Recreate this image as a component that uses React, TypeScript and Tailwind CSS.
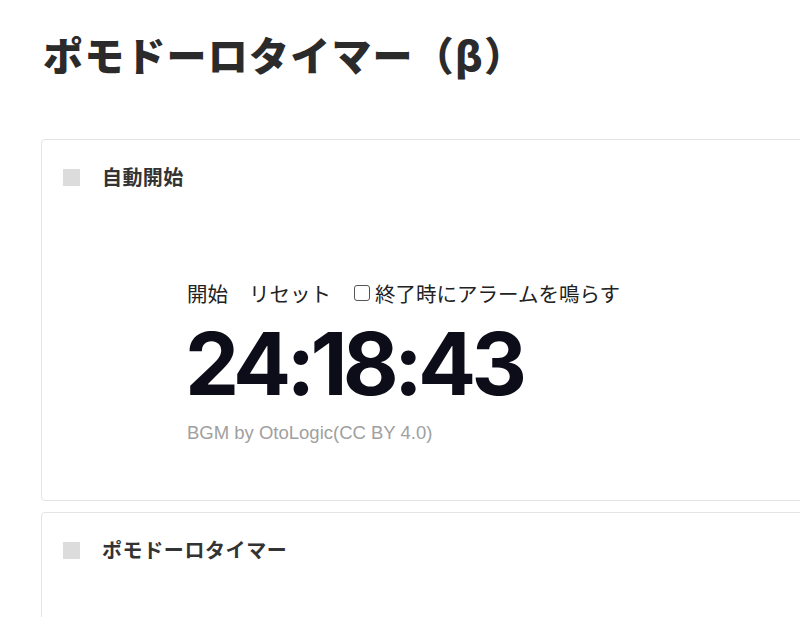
export default function App() {
  return (
    <div
      className="h-[617px] w-[800px] overflow-hidden bg-white text-[#333]"
      style={{ fontFamily: '"Noto Sans CJK JP", "Noto Sans", sans-serif' }}
    >
      <div className="pl-[41px]">
        <h1 className="pt-[26px] pl-[2px] text-[40px] leading-[56px] font-black tracking-[0.03em] text-[#2b2b2b]">
          ポモドーロタイマー（β）
        </h1>

        <section className="mt-[57px] w-[820px] h-[362px] rounded-[4px] border border-[#e4e4e4] bg-white">
          <div className="flex items-center pt-[26px] pl-[21px]">
            <span className="h-[17px] w-[17px] bg-[#dcdcdc]" />
            <span className="ml-[22px] text-[20px] font-bold leading-[22px] tracking-[0.02em] text-[#333]">
              自動開始
            </span>
          </div>

          <div className="mt-[92px] pl-[145px]">
            <div className="flex items-center text-[20.5px] leading-[26px] text-[#222]">
              <span>開始</span>
              <span className="ml-[21px]">リセット</span>
              <span className="ml-[23px] flex items-center">
                <span className="mr-[5px] h-[16px] w-[16px] rounded-[3px] border border-[#555]" />
                終了時にアラームを鳴らす
              </span>
            </div>
            <div
              className="mt-[12px] -ml-[2px] text-[86px] font-bold leading-[92px] tracking-[-0.055em] text-[#0d0d1a]"
              style={{ fontFamily: 'Inter, "Liberation Sans", sans-serif' }}
            >
              24:18:43
            </div>
            <div
              className="mt-[12px] text-[18.5px] leading-[22px] text-[#a0a0a0]"
              style={{ fontFamily: '"Liberation Sans", Arial, sans-serif' }}
            >
              BGM by OtoLogic(CC BY 4.0)
            </div>
          </div>
        </section>

        <section className="mt-[11px] w-[820px] h-[140px] rounded-[4px] border border-[#e4e4e4] bg-white">
          <div className="flex items-center pt-[26px] pl-[21px]">
            <span className="h-[17px] w-[17px] bg-[#dcdcdc]" />
            <span className="ml-[22px] text-[20px] font-bold leading-[22px] tracking-[0.03em] text-[#333]">
              ポモドーロタイマー
            </span>
          </div>
        </section>
      </div>
    </div>
  );
}
